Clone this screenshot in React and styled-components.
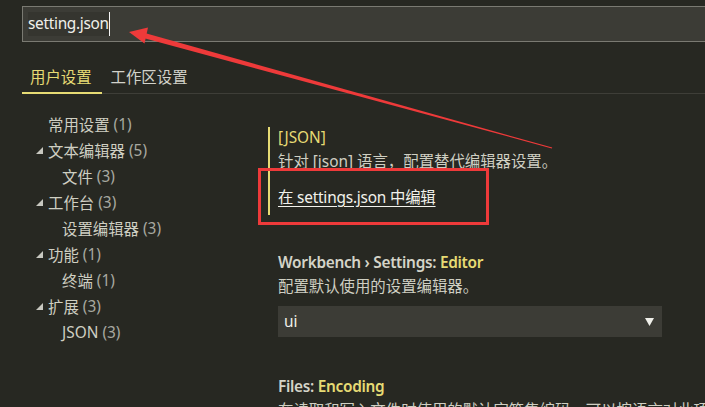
import styled, { createGlobalStyle } from "styled-components";

const Global = createGlobalStyle`
    html, body {
        margin: 0;
        padding: 0;
        background: #272822;
        overflow: hidden;
    }
    body {
        font-family: "Noto Sans", "Noto Sans CJK SC", sans-serif;
        color: #cfcfc2;
    }
`

const Page = styled.div`
    position: relative;
    width: 705px;
    height: 407px;
    overflow: hidden;
    padding: 6px 0 0 22px;
    box-sizing: border-box;
`
const SearchBox = styled.div`
    width: 720px;
    height: 36px;
    box-sizing: border-box;
    border: 1px solid #7a7a72;
    background: #3c3c36;
    display: flex;
    align-items: center;
    padding-left: 5px;
`
const Query = styled.span`
    font-size: 15.4px;
    letter-spacing: -0.3px;
    color: #f0f0ea;
    background: #35352f;
    line-height: 24px;
    border-right: 1px solid #f5f5f5;
`
const Tabs = styled.div`
    display: flex;
    margin-top: 21px;
    border-bottom: 1px solid #3e3e38;
`
const Tab = styled.div`
    font-size: 15.4px;
    line-height: 29px;
    padding: 0 10px 0 8px;
    margin-right: 1px;
    color: ${p => (p.$active ? "#e6db74" : "#d2d2ca")};
    border-bottom: 2px solid ${p => (p.$active ? "#e6db74" : "transparent")};
    margin-bottom: -1px;
`
const Body = styled.div`
    display: flex;
`
const Tree = styled.div`
    width: 236px;
    flex-shrink: 0;
    padding-top: 17px;
`
const Row = styled.div`
    height: 26px;
    display: flex;
    align-items: center;
    padding-left: ${p => (p.$child ? 40 : 26)}px;
    font-size: 15.4px;
    position: relative;
`
const Twistie = styled.svg`
    position: absolute;
    left: 14px;
    top: 10px;
`
const Count = styled.span`
    color: #a8a8a0;
    margin-left: 4px;
`
const Content = styled.div`
    flex: 1;
    min-width: 0;
    padding: 33px 0 0 10px;
`
const Setting = styled.div`
    border-left: 2px solid ${p => (p.$modified ? "#e6db74" : "transparent")};
    padding: 0 0 ${p => (p.$modified ? 6 : 0)}px 8px;
    margin-bottom: ${p => p.$gap || 0}px;
    font-size: 15.4px;
`
const Title = styled.div`
    line-height: 22px;
    font-weight: 600;
    letter-spacing: -0.3px;
    color: #d4d4c8;
    white-space: nowrap;
`
const Key = styled.span`
    color: #e6db74;
`
const Lang = styled.div`
    line-height: 22px;
    color: #e6db74;
`
const Desc = styled.div`
    line-height: 22px;
    margin-top: 2px;
    white-space: nowrap;
    color: #cfcfc2;
`
const EditLink = styled.a`
    display: block;
    margin-top: 14px;
    line-height: 22px;
    letter-spacing: -0.2px;
    color: #f2f2ec;
    text-decoration: underline;
    text-underline-offset: 3px;
`
const Select = styled.div`
    margin-top: 8px;
    width: 384px;
    height: 31px;
    background: #3c3c36;
    display: flex;
    align-items: center;
    justify-content: space-between;
    padding: 0 8px 0 6px;
    box-sizing: border-box;
    color: #f0f0ea;
`
const Highlight = styled.div`
    position: absolute;
    left: 258px;
    top: 168px;
    width: 231px;
    height: 57px;
    box-sizing: border-box;
    border: 3px solid #ee3a3a;
    pointer-events: none;
`
const Overlay = styled.svg`
    position: absolute;
    left: 0;
    top: 0;
    pointer-events: none;
`

const tree = [
    { label: "常用设置", count: 1 },
    { label: "文本编辑器", count: 5, open: true },
    { label: "文件", count: 3, child: true },
    { label: "工作台", count: 3, open: true },
    { label: "设置编辑器", count: 3, child: true },
    { label: "功能", count: 1, open: true },
    { label: "终端", count: 1, child: true },
    { label: "扩展", count: 3, open: true },
    { label: "JSON", count: 3, child: true },
];

export default function App() {
    return (
        <>
            <Global />
            <Page>
                <SearchBox>
                    <Query>setting.json</Query>
                </SearchBox>
                <Tabs>
                    <Tab $active>用户设置</Tab>
                    <Tab>工作区设置</Tab>
                </Tabs>
                <Body>
                    <Tree>
                        {tree.map(item => (
                            <Row key={item.label} $child={item.child}>
                                {item.open && (
                                    <Twistie width="7" height="7" viewBox="0 0 7 7">
                                        <polygon points="7,0 7,7 0,7" fill="#c8c8c0" />
                                    </Twistie>
                                )}
                                {item.label}
                                <Count>({item.count})</Count>
                            </Row>
                        ))}
                    </Tree>
                    <Content>
                        <Setting $modified $gap={37}>
                            <Lang>[JSON]</Lang>
                            <Desc>针对 [json] 语言，配置替代编辑器设置。</Desc>
                            <EditLink>在 settings.json 中编辑</EditLink>
                        </Setting>
                        <Setting $gap={39}>
                            <Title>Workbench › Settings: <Key>Editor</Key></Title>
                            <Desc>配置默认使用的设置编辑器。</Desc>
                            <Select>
                                ui
                                <svg width="9" height="8" viewBox="0 0 9 8">
                                    <polygon points="0,0 9,0 4.5,8" fill="#f0f0ea" />
                                </svg>
                            </Select>
                        </Setting>
                        <Setting>
                            <Title>Files: <Key>Encoding</Key></Title>
                            <Desc>在读取和写入文件时使用的默认字符集编码。可以按语言对此项进行配置。</Desc>
                        </Setting>
                    </Content>
                </Body>
                <Highlight />
                <Overlay width="705" height="407" viewBox="0 0 705 407">
                    <polygon
                        points="143,32.6 552.2,147.6 551.8,148.4 141.6,37.6"
                        fill="#ee3a3a"
                    />
                    <polygon points="129,32 148,27.5 144.5,43.5" fill="#ee3a3a" />
                </Overlay>
            </Page>
        </>
    );
}
